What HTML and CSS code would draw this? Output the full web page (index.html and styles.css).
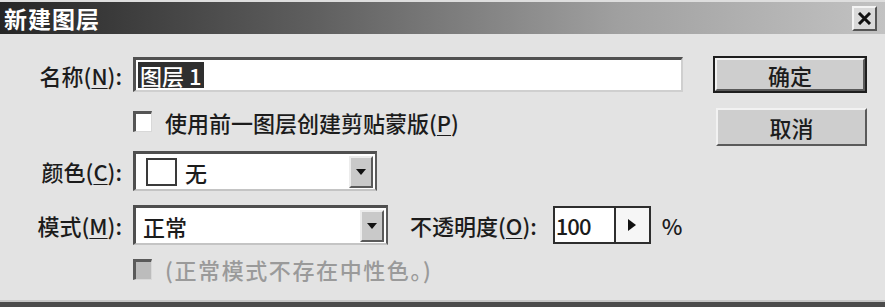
FILE: index.html
```html
<!DOCTYPE html>
<html lang="zh-CN">
<head>
<meta charset="utf-8">
<title>新建图层</title>
<link rel="stylesheet" href="styles.css">
</head>
<body>
<div class="dialog">
  <div class="titlebar">
    <span class="title">新建图层</span>
    <span class="close-btn">
      <svg width="15" height="13" viewBox="0 0 15 13"><path d="M2 1 L13 12 M13 1 L2 12" stroke="#111" stroke-width="3" fill="none"/></svg>
    </span>
  </div>
  <div class="content">
    <div class="form">
      <div class="row row-name">
        <span class="label">名称(<u>N</u>):</span>
        <div class="textbox"><span class="selected">图层 1</span></div>
      </div>
      <div class="row row-clip">
        <span class="checkbox"></span>
        <span class="check-text">使用前一图层创建剪贴蒙版(<u>P</u>)</span>
      </div>
      <div class="row row-color">
        <span class="label">颜色(<u>C</u>):</span>
        <div class="select select-color">
          <span class="swatch"></span>
          <span class="select-text">无</span>
          <span class="drop-btn"><svg width="10" height="6" viewBox="0 0 10 6"><path d="M0 0 H10 L5 6 Z" fill="#111"/></svg></span>
        </div>
      </div>
      <div class="row row-mode">
        <span class="label">模式(<u>M</u>):</span>
        <div class="select select-mode">
          <span class="select-text mode-text">正常</span>
          <span class="drop-btn"><svg width="10" height="6" viewBox="0 0 10 6"><path d="M0 0 H10 L5 6 Z" fill="#111"/></svg></span>
        </div>
        <span class="opacity-label">不透明度(<u>O</u>):</span>
        <div class="opacity-box">
          <span class="opacity-value">100</span>
          <span class="opacity-btn"><svg width="8" height="12" viewBox="0 0 8 12"><path d="M0 0 L8 6 L0 12 Z" fill="#111"/></svg></span>
        </div>
        <span class="percent">%</span>
      </div>
      <div class="row row-neutral">
        <span class="checkbox disabled"></span>
        <span class="check-text disabled-text">(正常模式不存在中性色。)</span>
      </div>
    </div>
    <div class="buttons">
      <div class="btn btn-default"><span class="btn-inner">确定</span></div>
      <div class="btn btn-cancel"><span class="btn-inner">取消</span></div>
    </div>
  </div>
  <div class="bottom-edge"></div>
</div>
</body>
</html>
```

FILE: styles.css
```css
* { box-sizing: border-box; }

html, body {
  margin: 0;
  padding: 0;
  background: #e3e3e3;
}

body {
  width: 885px;
  height: 307px;
  overflow: hidden;
  font-family: "Noto Sans CJK SC", "Noto Sans", sans-serif;
  font-size: 22px;
  font-weight: 500;
  color: #1c1c1c;
}

.dialog {
  width: 885px;
  height: 307px;
  display: flex;
  flex-direction: column;
  background: #e3e3e3;
  border-top: 2px solid #dedede;
}

.titlebar {
  height: 32px;
  flex: none;
  display: flex;
  align-items: center;
  justify-content: space-between;
  padding: 0 8px 0 4px;
  background: linear-gradient(to right, #262626 0%, #5e5e5e 35%, #a0a0a0 70%, #c2c2c2 100%);
}

.title {
  color: #fff;
  font-weight: 700;
  font-size: 23px;
  line-height: 32px;
  letter-spacing: 1px;
}

.close-btn {
  width: 25px;
  height: 25px;
  display: flex;
  align-items: center;
  justify-content: center;
  background: #d9d9d9;
  border-top: 2px solid #f4f4f4;
  border-left: 2px solid #f4f4f4;
  border-right: 2px solid #555;
  border-bottom: 2px solid #555;
}

.content {
  flex: 1;
  display: flex;
}

.form {
  width: 683px;
  padding-top: 23px;
  display: flex;
  flex-direction: column;
}

.row {
  display: flex;
  align-items: center;
}

.label {
  width: 122px;
  text-align: right;
  margin-right: 11px;
  white-space: nowrap;
}

u { text-decoration-thickness: 1px; text-underline-offset: 3px; }

.row-name { height: 35px; }
.row-clip { height: 21px; margin-top: 19px; padding-left: 133px; }
.row-color { height: 40px; margin-top: 19px; }
.row-mode { height: 40px; margin-top: 14px; }
.row-neutral { height: 22px; margin-top: 13px; padding-left: 133px; }

.textbox {
  width: 550px;
  height: 35px;
  background: #fff;
  border-top: 3px solid #505050;
  border-left: 3px solid #505050;
  border-right: 2px solid #cfcfcf;
  border-bottom: 2px solid #cfcfcf;
  display: flex;
  align-items: center;
  padding-left: 2px;
}

.selected {
  background: #2f2f2f;
  color: #fff;
  line-height: 26px;
  padding: 0 2px;
}

.checkbox {
  width: 19px;
  height: 21px;
  background: #fff;
  border-top: 3px solid #555;
  border-left: 3px solid #555;
  border-right: 1px solid #d8d8d8;
  border-bottom: 1px solid #d8d8d8;
  flex: none;
}

.checkbox.disabled {
  background: #bcbcbc;
  border-top-color: #5a5a5a;
  border-left-color: #5a5a5a;
}

.check-text {
  margin-left: 13px;
  white-space: nowrap;
}

.disabled-text {
  color: #9a9a9a;
  letter-spacing: 1.6px;
}

.select {
  height: 40px;
  background: #fff;
  border-top: 3px solid #4f4f4f;
  border-left: 3px solid #4f4f4f;
  border-right: 2px solid #5c5c5c;
  border-bottom: 2px solid #c4c4c4;
  display: flex;
  align-items: center;
}

.select-color { width: 244px; }
.select-mode { width: 255px; }

.swatch {
  width: 31px;
  height: 28px;
  margin-left: 10px;
  background: #fff;
  border: 2px solid #3a3a3a;
  flex: none;
}

.select-text { margin-left: 8px; }
.mode-text { margin-left: 7px; }

.drop-btn {
  margin-left: auto;
  margin-right: 2px;
  width: 24px;
  height: 32px;
  display: flex;
  align-items: center;
  justify-content: center;
  background: #c9c9c9;
  border-top: 2px solid #ececec;
  border-left: 2px solid #ececec;
  border-right: 2px solid #5a5a5a;
  border-bottom: 2px solid #5a5a5a;
}

.opacity-label {
  margin-left: 22px;
  white-space: nowrap;
}

.opacity-box {
  margin-left: 16px;
  width: 98px;
  height: 38px;
  display: flex;
  border: 2px solid #2e2e2e;
  background: #fff;
}

.opacity-value {
  width: 61px;
  border-right: 2px solid #2e2e2e;
  line-height: 34px;
  padding-left: 1px;
  letter-spacing: -1px;
}

.opacity-btn {
  flex: 1;
  display: flex;
  align-items: center;
  justify-content: center;
  background: #f6f6f6;
}

.percent { margin-left: 11px; }

.buttons {
  margin-left: 30px;
  padding-top: 22px;
  display: flex;
  flex-direction: column;
  gap: 15px;
}

.btn {
  width: 154px;
  height: 37px;
  display: flex;
}

.btn-inner {
  flex: 1;
  display: flex;
  align-items: center;
  justify-content: center;
  background: #cecece;
  border-top: 2px solid #f2f2f2;
  border-left: 2px solid #f2f2f2;
  border-right: 2px solid #5a5a5a;
  border-bottom: 2px solid #5a5a5a;
}

.btn-default {
  border: 2px solid #1e1e1e;
}

.btn-cancel {
  height: 38px;
  padding-left: 3px;
}

.bottom-edge {
  height: 7px;
  flex: none;
  border-top: 2px solid #c6c6c6;
  background: #4c4c4c;
}
```
